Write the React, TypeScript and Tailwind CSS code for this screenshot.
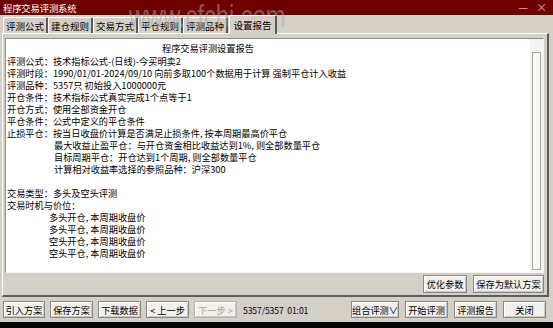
import type { ReactNode } from "react";

const tabs = ["评测公式", "建仓规则", "交易方式", "平仓规则", "评测品种", "设置报告"];

const lines: { text: string; indent?: string }[] = [
  { text: "评测公式：技术指标公式-(日线)-今买明卖2" },
  { text: "评测时段：1990/01/01-2024/09/10 向前多取100个数据用于计算 强制平仓计入收益" },
  { text: "评测品种：5357只 初始投入1000000元" },
  { text: "开仓条件：技术指标公式真实完成1个点等于1" },
  { text: "开仓方式：使用全部资金开仓" },
  { text: "平仓条件：公式中定义的平仓条件" },
  { text: "止损平仓：按当日收盘价计算是否满足止损条件, 按本周期最高价平仓" },
  { text: "最大收益止盈平仓：与开仓资金相比收益达到1%, 则全部数量平仓", indent: "pl-[47px]" },
  { text: "目标周期平仓：开仓达到1个周期, 则全部数量平仓", indent: "pl-[47px]" },
  { text: "计算相对收益率选择的参照品种：沪深300", indent: "pl-[47px]" },
  { text: "\u00a0" },
  { text: "交易类型：多头及空头评测" },
  { text: "交易时机与价位：" },
  { text: "多头开仓, 本周期收盘价", indent: "pl-[42px]" },
  { text: "多头平仓, 本周期收盘价", indent: "pl-[42px]" },
  { text: "空头开仓, 本周期收盘价", indent: "pl-[42px]" },
  { text: "空头平仓, 本周期收盘价", indent: "pl-[42px]" },
];

function Btn({ children, w, disabled }: { children: ReactNode; w: string; disabled?: boolean }) {
  return (
    <div
      className={`${w} h-full flex items-center justify-center whitespace-nowrap border bg-[#f1f0ed] shadow-[inset_1px_1px_0_#ffffff,inset_-1px_-1px_0_#c8c6c0] ${
        disabled ? "border-[#b4b2ac] text-[#a8a6a0]" : "border-[#8a8882] text-black"
      }`}
    >
      {children}
    </div>
  );
}

export default function App() {
  return (
    <div className="relative w-[553px] h-[328px] overflow-hidden bg-black font-['Noto_Sans_CJK_SC',sans-serif] text-[9.2px] leading-[12px] text-black">
      <div className="h-[322px] flex flex-col bg-[#d4d0c8]">
        {/* title bar */}
        <div className="h-[15px] shrink-0 flex items-center justify-between bg-[#6e0000] pl-[3px] pr-[6px] text-white">
          <span className="text-[9.4px] tracking-[-0.2px]">程序交易评测系统</span>
          <div className="flex items-center gap-[8px] text-[#c9b9b9] text-[11px] leading-none">
            <span>—</span>
            <span>×</span>
          </div>
        </div>

        {/* tabs */}
        <div className="h-[18px] shrink-0 flex items-end pl-[3px]">
          {tabs.map((t, i) => {
            const active = i === tabs.length - 1;
            return (
              <div
                key={t}
                className={`flex items-center justify-center whitespace-nowrap text-[9.5px] border-l border-t border-white border-r-2 border-r-[#5a5a5a] rounded-t-[2px] bg-[#d4d0c8] ${
                  active
                    ? "relative z-10 h-[19px] -mb-[1px] w-[48px] ml-[1px]"
                    : "h-[16px] w-[45px]"
                }`}
              >
                {t}
              </div>
            );
          })}
        </div>

        {/* tab page */}
        <div className="ml-[2px] mr-[4px] h-[264px] shrink-0 flex flex-col border-l border-t border-white border-r-2 border-r-[#5c5c5c] border-b-2 border-b-[#5c5c5c]">
          <div className="mt-[4px] ml-[2px] mr-[3px] h-[235px] flex border border-t-[#8e8e8e] border-l-[#8e8e8e] border-r-[#f4f4f4] border-b-[#f4f4f4]">
            <div className="flex-1 bg-white pt-[3px] pl-[1px] overflow-hidden">
              <div className="pl-[155px] mb-[1px]">程序交易评测设置报告</div>
              {lines.map((l, i) => (
                <div key={i} className={`whitespace-nowrap ${l.indent ?? ""}`}>
                  {l.text}
                </div>
              ))}
            </div>
            <div className="w-[13px] bg-[#f4f3f1] flex flex-col items-center pt-[13px] pb-[2px]">
              <div className="w-[9px] flex-1 border border-[#a9a7a2] bg-[#f7f7f5]" />
            </div>
          </div>
          <div className="h-[18px] mt-[2px] mr-[3px] flex justify-end gap-[6px]">
            <Btn w="w-[44px]">优化参数</Btn>
            <Btn w="w-[71px]">保存为默认方案</Btn>
          </div>
        </div>

        {/* bottom buttons */}
        <div className="h-[17px] mt-[4px] pl-[3px] pr-[7px] flex items-center">
          <div className="h-full flex gap-[5px]">
            <Btn w="w-[42px]">引入方案</Btn>
            <Btn w="w-[43px]">保存方案</Btn>
            <Btn w="w-[43px]">下载数据</Btn>
            <Btn w="w-[43px]">&lt; 上一步</Btn>
            <Btn w="w-[43px]" disabled>
              下一步 &gt;
            </Btn>
          </div>
          <span className="ml-[6px] text-[8.6px] tracking-[-0.1px]">5357/5357&nbsp;&nbsp;01:01</span>
          <div className="ml-auto h-full flex gap-[6px]">
            <Btn w="w-[48px]">组合评测∨</Btn>
            <Btn w="w-[43px]">开始评测</Btn>
            <Btn w="w-[43px]">评测报告</Btn>
            <Btn w="w-[43px]">关闭</Btn>
          </div>
        </div>
      </div>

      {/* watermark */}
      <div className="pointer-events-none absolute left-[129px] top-[2px] origin-left scale-x-[0.74] font-['Liberation_Sans',sans-serif] text-[32px] leading-[28px] text-[#a8a8a8]/50">
        www.cfchi.com
      </div>
    </div>
  );
}
